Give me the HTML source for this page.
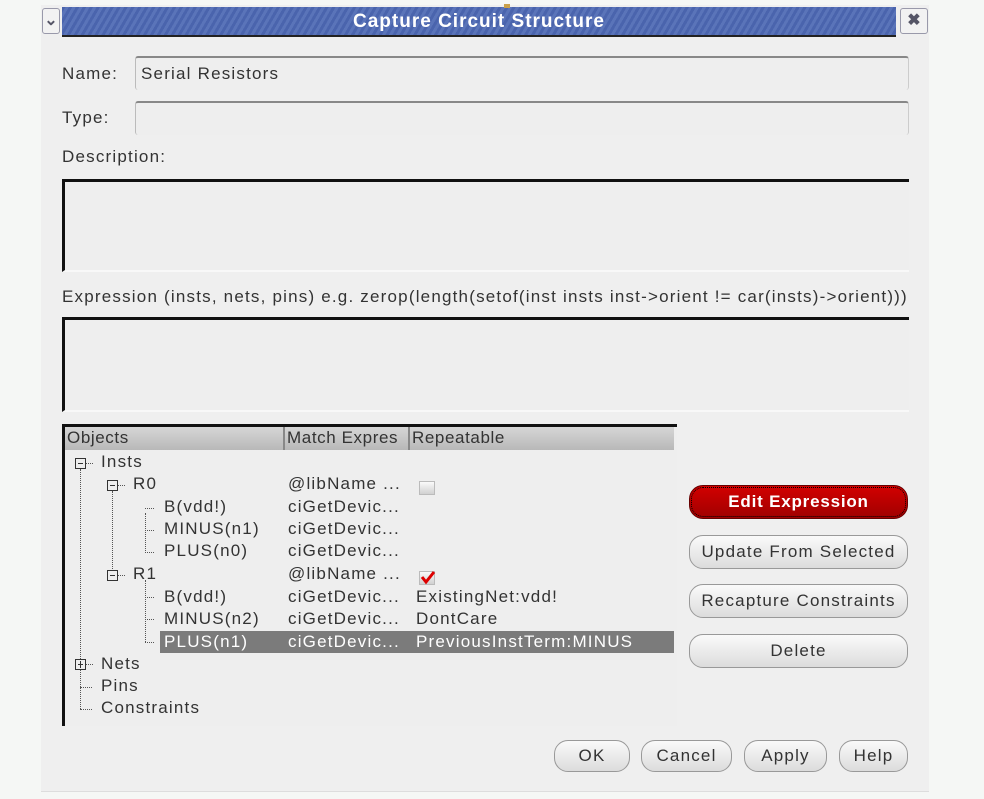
<!DOCTYPE html>
<html><head><meta charset="utf-8"><style>
*{margin:0;padding:0;box-sizing:border-box}
body{width:984px;height:799px;background:#f5f7f5;position:relative;overflow:hidden;font-family:"Liberation Sans",sans-serif;color:#333;font-size:17px;letter-spacing:1.2px}
.a{position:absolute}
.win{left:41px;top:5px;width:888px;height:787px;background:#efefef;border-bottom:1px solid #ddd}
.tb{left:62px;top:7px;width:834px;height:30px;background:repeating-linear-gradient(120deg,#4a64ad 0 3px,#5a74b9 3px 6px);border-bottom:2px solid #222;color:#fff;font-weight:bold;font-size:19px;text-align:center;line-height:29px;letter-spacing:1px}
.wb{top:8px;width:28px;height:26px;border:1px solid #99a;border-radius:3px;background:#f2f2f2;text-align:center;color:#556;font-weight:bold;font-size:16px;line-height:24px;letter-spacing:0}
.fld{left:135px;width:774px;height:34px;border-top:2px solid #888;border-left:1px solid #bbb;border-right:1px solid #ccc;border-radius:3px;background:#eeeeee}
.ta{left:62px;width:847px;border-top:3px solid #111;border-left:3px solid #111;background:#eeeeee;border-bottom:2px solid #f8f8f8}
.lab{font-size:17px;color:#333}
.tree{left:62px;top:424px;width:615px;height:302px;border-top:3px solid #111;border-left:3px solid #111;background:#eeeeee}
.hd{left:65px;top:427px;width:609px;height:23px;background:linear-gradient(#d6d6d6,#b8b8b8);font-size:17px;color:#333;line-height:22px;letter-spacing:.6px}
.row{position:absolute;font-size:17px;line-height:22px;height:22px}
.btn{position:absolute;height:34px;border:1px solid #999;border-radius:14px;background:linear-gradient(#fafafa,#dcdcdc);text-align:center;line-height:32px;font-size:17px;color:#333;letter-spacing:1.2px}
.bx{position:absolute;width:11px;height:11px;border:1px solid #333;background:#eee}
.bx:after{content:"";position:absolute;left:2px;top:4px;width:5px;height:1px;background:#333}
.vl{position:absolute;border-left:1px dotted #555}
.hl{position:absolute;border-top:1px dotted #555;width:9px}
</style></head><body>
<div class="a win"></div>
<div class="a wb" style="left:42px;width:18px">&#8964;</div>
<div class="a tb">Capture Circuit Structure</div>
<div class="a" style="left:504px;top:4px;width:6px;height:4px;background:#c9a04a"></div>
<div class="a wb" style="left:900px">&#10006;</div>

<div class="a lab" style="left:62px;top:64px">Name:</div>
<div class="a fld" style="top:56px"></div>
<div class="a" style="left:141px;top:64px">Serial Resistors</div>
<div class="a lab" style="left:62px;top:108px">Type:</div>
<div class="a fld" style="top:101px"></div>
<div class="a lab" style="left:62px;top:147px">Description:</div>
<div class="a ta" style="top:179px;height:93px"></div>
<div class="a lab" style="left:62px;top:287px">Expression (insts, nets, pins) e.g. zerop(length(setof(inst insts inst-&gt;orient != car(insts)-&gt;orient)))</div>
<div class="a ta" style="top:317px;height:95px"></div>

<div class="a tree"></div>
<div class="a hd"><span class="a" style="left:2px">Objects</span><span class="a" style="left:218px;top:0;height:23px;border-left:2px solid #888"></span><span class="a" style="left:222px">Match Expres</span><span class="a" style="left:343px;top:0;height:23px;border-left:2px solid #888"></span><span class="a" style="left:347px">Repeatable</span></div>

<div class="a" style="left:160px;top:631px;width:514px;height:22px;background:#7b7b7b"></div>

<div class="vl" style="left:80px;top:469px;height:240px"></div>
<div class="vl" style="left:112px;top:491px;height:84px"></div>
<div class="vl" style="left:145px;top:513px;height:40px"></div>
<div class="vl" style="left:145px;top:580px;height:62px"></div>
<div class="hl" style="left:86px;top:463px;width:7px"></div>
<div class="hl" style="left:118px;top:485px;width:7px"></div>
<div class="hl" style="left:118px;top:575px;width:7px"></div>
<div class="hl" style="left:145px;top:508px"></div>
<div class="hl" style="left:145px;top:530px"></div>
<div class="hl" style="left:145px;top:552px"></div>
<div class="hl" style="left:145px;top:597px"></div>
<div class="hl" style="left:145px;top:619px"></div>
<div class="hl" style="left:145px;top:642px"></div>
<div class="hl" style="left:86px;top:664px;width:7px"></div>
<div class="hl" style="left:80px;top:687px;width:12px"></div>
<div class="hl" style="left:80px;top:709px;width:12px"></div>
<div class="bx" style="left:75px;top:458px"></div>
<div class="bx" style="left:107px;top:480px"></div>
<div class="bx" style="left:107px;top:570px"></div>
<div class="bx" style="left:75px;top:659px"></div>
<div class="a" style="left:80px;top:661px;width:1px;height:7px;background:#333"></div>

<div class="row" style="left:101px;top:451px">Insts</div>
<div class="row" style="left:133px;top:473px">R0</div>
<div class="row" style="left:164px;top:496px">B(vdd!)</div>
<div class="row" style="left:164px;top:518px">MINUS(n1)</div>
<div class="row" style="left:164px;top:540px">PLUS(n0)</div>
<div class="row" style="left:133px;top:563px">R1</div>
<div class="row" style="left:164px;top:586px">B(vdd!)</div>
<div class="row" style="left:164px;top:608px">MINUS(n2)</div>
<div class="row" style="left:164px;top:631px;color:#fff">PLUS(n1)</div>
<div class="row" style="left:101px;top:653px">Nets</div>
<div class="row" style="left:101px;top:675px">Pins</div>
<div class="row" style="left:101px;top:697px">Constraints</div>

<div class="row" style="left:288px;top:473px">@libName ...</div>
<div class="row" style="left:288px;top:496px">ciGetDevic...</div>
<div class="row" style="left:288px;top:518px">ciGetDevic...</div>
<div class="row" style="left:288px;top:540px">ciGetDevic...</div>
<div class="row" style="left:288px;top:563px">@libName ...</div>
<div class="row" style="left:288px;top:586px">ciGetDevic...</div>
<div class="row" style="left:288px;top:608px">ciGetDevic...</div>
<div class="row" style="left:288px;top:631px;color:#fff">ciGetDevic...</div>

<div class="a" style="left:419px;top:481px;width:16px;height:14px;background:linear-gradient(#fafafa,#d0d0d0);border:1px solid #bbb"></div>
<div class="a" style="left:419px;top:571px;width:16px;height:14px;background:linear-gradient(#fafafa,#d0d0d0);border:1px solid #bbb"></div>
<svg class="a" style="left:419px;top:569px" width="18" height="16"><path d="M3 8 L7 13 L15 3" stroke="#d00" stroke-width="3" fill="none"/></svg>
<div class="row" style="left:416px;top:586px">ExistingNet:vdd!</div>
<div class="row" style="left:416px;top:608px">DontCare</div>
<div class="row" style="left:416px;top:631px;color:#fff">PreviousInstTerm:MINUS</div>

<div class="btn" style="left:689px;top:485px;width:219px;background:linear-gradient(#d20000,#a00000);color:#fff;font-weight:bold;border:1px solid #600;outline:1px dotted #000;outline-offset:-3px;letter-spacing:.8px">Edit Expression</div>
<div class="btn" style="left:689px;top:535px;width:219px">Update From Selected</div>
<div class="btn" style="left:689px;top:584px;width:219px">Recapture Constraints</div>
<div class="btn" style="left:689px;top:634px;width:219px">Delete</div>

<div class="btn" style="left:554px;top:740px;width:76px;height:32px;line-height:30px">OK</div>
<div class="btn" style="left:641px;top:740px;width:91px;height:32px;line-height:30px">Cancel</div>
<div class="btn" style="left:744px;top:740px;width:83px;height:32px;line-height:30px">Apply</div>
<div class="btn" style="left:839px;top:740px;width:69px;height:32px;line-height:30px">Help</div>
</body></html>
